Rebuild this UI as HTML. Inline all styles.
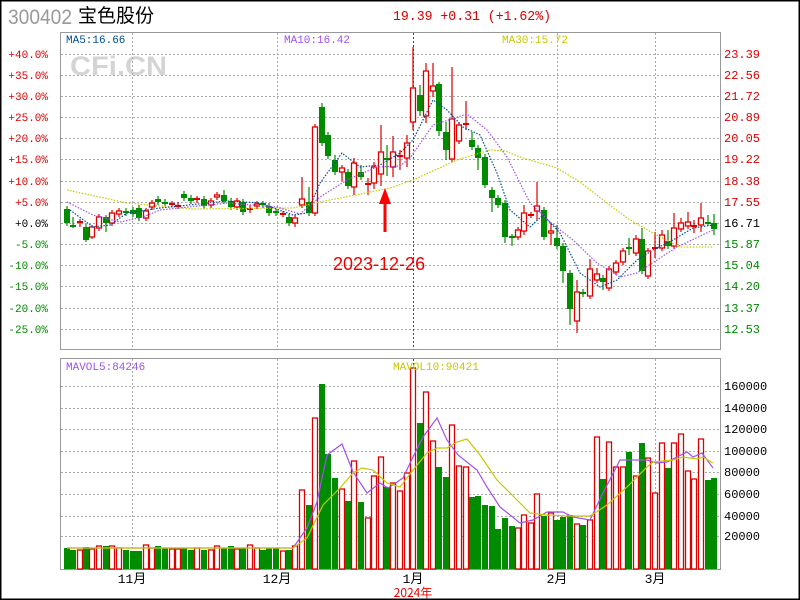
<!DOCTYPE html>
<html><head><meta charset="utf-8"><style>
html,body{margin:0;padding:0;background:#fff;}
#c{position:relative;width:800px;height:600px;overflow:hidden;font-family:"Liberation Sans","Noto Sans CJK SC",sans-serif;}
svg text{font-family:"Liberation Mono","Noto Sans CJK SC",monospace;}
</style></head><body><div id="c">
<svg id="s" width="800" height="600" viewBox="0 0 800 600" xmlns="http://www.w3.org/2000/svg">
<rect x="0.5" y="0.5" width="799" height="599" fill="#fff" stroke="#000" stroke-width="2"/>
<text x="8" y="24" font-size="21" fill="#999" textLength="64" lengthAdjust="spacingAndGlyphs" style="font-family:'Liberation Sans',sans-serif">300402</text>
<text x="78" y="22" font-size="19" fill="#000" style="font-family:'Noto Sans CJK SC',sans-serif">宝色股份</text>
<text x="393" y="20" font-size="14" fill="#d00" textLength="158" lengthAdjust="spacingAndGlyphs" style="font-family:'Liberation Mono',monospace">19.39 +0.31 (+1.62%)</text>
<text x="70" y="75" font-size="27" font-weight="bold" fill="#d4d4d4" textLength="97" lengthAdjust="spacingAndGlyphs" style="font-family:'Liberation Sans',sans-serif">CFi.CN</text>
<g id="grid"></g>
<rect x="60.5" y="32.5" width="660" height="317" fill="none" stroke="#999"/>
<rect x="60.5" y="358.5" width="660" height="211" fill="none" stroke="#999"/>
<g id="lab" font-size="11"></g>
<g id="vol"></g>
<g id="cnd"></g>
<g id="ma" fill="none"></g>
<text x="66" y="43" font-size="11" fill="#004c99">MA5:16.66</text>
<text x="284" y="43" font-size="11" fill="#a050f0">MA10:16.42</text>
<text x="502" y="43" font-size="11" fill="#c8c800">MA30:15.72</text>
<text x="66" y="370" font-size="11" fill="#a050f0">MAVOL5:84246</text>
<text x="393" y="370" font-size="11" fill="#c8c800">MAVOL10:90421</text>
<text x="333" y="270" font-size="18" fill="#e00" style="font-family:'Liberation Sans',sans-serif">2023-12-26</text>
<line x1="385" y1="200" x2="385" y2="232" stroke="#f00" stroke-width="3"/>
<polygon points="385,188 379,204 391,204" fill="#f00"/>
<g font-size="13" fill="#000" text-anchor="middle" style="font-family:'Noto Sans CJK SC',sans-serif">
<text x="132" y="583">11月</text><text x="277" y="583">12月</text><text x="413" y="583">1月</text><text x="557" y="583">2月</text><text x="655" y="583">3月</text>
</g>
<text x="413" y="597" font-size="12" fill="#e00" text-anchor="middle" style="font-family:'Noto Sans CJK SC',sans-serif">2024年</text>
</svg></div>
<script>
var NS="http://www.w3.org/2000/svg";
function el(p,t,a,txt){var e=document.createElementNS(NS,t);for(var k in a)e.setAttribute(k,a[k]);if(txt!=null)e.textContent=txt;document.getElementById(p).appendChild(e);return e;}
var py=[54,75,96,117,138,159,181,202,223,244,265,286,308,329];
var rl=["23.39","22.56","21.72","20.89","20.05","19.22","18.38","17.55","16.71","15.87","15.04","14.20","13.37","12.53"];
var ll=["+40.0%","+35.0%","+30.0%","+25.0%","+20.0%","+15.0%","+10.0%","+5.0%","+0.0%","-5.0%","-10.0%","-15.0%","-20.0%","-25.0%"];
py.forEach(function(y,i){
 el("grid","line",{x1:61,y1:y+.5,x2:720,y2:y+.5,stroke:"#aaa","stroke-dasharray":"2,2"});
 var col=i<8?"#d00":(i==8?"#000":"#080");
 el("lab","text",{x:48,y:y+4,"text-anchor":"end",fill:col},ll[i]);
 el("lab","text",{x:724,y:y+4,fill:col,"font-size":"12"},rl[i]);
});
var vy=[386,408,429,451,472,494,516,536];
var vl=["160000","140000","120000","100000","80000","60000","40000","20000"];
vy.forEach(function(y,i){
 el("grid","line",{x1:61,y1:y+.5,x2:720,y2:y+.5,stroke:"#aaa","stroke-dasharray":"2,2"});
 el("lab","text",{x:724,y:y+4,fill:"#000","font-size":"12"},vl[i]);
});
[132,277,557,655].forEach(function(x){
 el("grid","line",{x1:x+.5,y1:33,x2:x+.5,y2:349,stroke:"#aaa","stroke-dasharray":"2,2"});
 el("grid","line",{x1:x+.5,y1:359,x2:x+.5,y2:569,stroke:"#aaa","stroke-dasharray":"2,2"});
});
el("grid","line",{x1:413.5,y1:33,x2:413.5,y2:349,stroke:"#e00","stroke-dasharray":"2,2"});
el("grid","line",{x1:413.5,y1:359,x2:413.5,y2:569,stroke:"#e00","stroke-dasharray":"2,2"});
var C=`67,209,223,g
73,225,227,g,217,228
80,222,222,r,219,227
86,227,240,g,,242
92,227,237,r,225,239
99,217,228,r
106,217,223,g,215,232
112,213,223,r
119,211,214,r,208,217
126,211,213,g
133,210,214,g,207
139,208,218,g
146,211,218,r
152,203,207,r
158,199,202,g
165,203,203,g,199,206
172,204,204,r
178,206,206,r,202,209
184,194,198,g
191,198,201,g
197,199,199,r,196,203
204,199,206,g
211,201,205,r
217,195,197,r
224,195,201,g,190
231,201,207,g
237,201,207,r
243,202,212,g
250,209,209,r,205,213
257,204,206,r
263,204,204,g,201,208
269,206,213,g
276,212,213,g
283,214,214,r,211,217
289,217,223,g
295,218,223,r,215,227
302,199,205,r,177,208
309,202,213,g,187
315,127,213,r
322,107,143,g,103
328,135,156,g
335,160,172,g,155,175
342,168,172,r,165,181
348,172,186,g
354,163,187,r,158,195
361,172,177,g,165
368,184,184,r,178,195
374,167,183,r,162,189
381,152,174,r,125,186
387,159,159,g,145,176
393,152,167,r,136,177
400,156,156,r,150,170
407,143,158,r,135,167
413,88,122,r,47,130
420,95,111,g,85,116
426,71,116,r,63,123
433,86,91,r,63,97
439,84,131,g,82,136
446,132,150,g,122,160
452,119,159,r,67,162
459,125,141,r
466,124,124,r,101,130
472,140,147,g,132
478,148,158,g,145,170
485,157,185,g
492,190,198,g,,212
498,198,205,g
505,203,237,g,,243
512,237,237,g,,246
518,230,237,r
524,213,231,r,205,235
531,215,215,r
537,206,211,r,182,220
544,210,237,g
551,231,233,r,223,245
557,238,246,g,225
563,246,271,g,,283
570,273,309,g,,325
577,292,321,r,280,333
583,292,294,g
590,269,296,r,259
597,274,280,r,268
603,278,282,g,,290
609,269,288,r
616,263,272,r
623,251,262,r
629,248,248,g,238,255
636,239,253,r,235
642,239,271,g,228
648,251,276,r
655,248,248,r,232,258
662,235,248,r,230
668,241,246,g,230
674,228,246,r,213
681,223,229,r,218
688,222,226,r,212
694,226,227,r,220,233
701,218,225,r,203,232
708,223,223,g,215
714,223,229,g,214,235`.split("\n");
var V=[548,550,550,547,549,546,546,546,548,550,551,551,545,548,546,548,549,549,548,550,548,550,550,546,548,546,549,548,545,548,550,548,548,551,550,546,490,505,418,384,454,478,489,501,461,502,518,476,457,487,483,491,473,
368,423,392,441,467,477,425,466,467,497,496,505,506,529,518,526,528,515,523,494,516,513,520,517,515,524,525,520,437,479,442,467,467,452,476,443,458,493,443,468,443,434,471,479,439,480,478];
var R="#dd0000",G="#008c00";
C.forEach(function(l,i){
 var a=l.split(","),x=+a[0],t=+a[1],b=+a[2],up=a[3]=="r";
 var hi=a[4]?+a[4]:t-3,lo=a[5]?+a[5]:b+3,col=up?R:G;
 el("cnd","line",{x1:x,y1:hi,x2:x,y2:lo,stroke:col,"stroke-width":1.2});
 if(b-t<1.5){el("cnd","line",{x1:x-3,y1:t,x2:x+3,y2:t,stroke:col,"stroke-width":2});}
 else if(up){el("cnd","rect",{x:x-2.5,y:t,width:5,height:b-t,fill:"#fff",stroke:col,"stroke-width":1.3});}
 else{el("cnd","rect",{x:x-3,y:t,width:6,height:b-t,fill:col});}
 var vt=V[i];
 if(up) el("vol","rect",{x:x-2.5,y:vt,width:5,height:569-vt,fill:"#fff",stroke:R,"stroke-width":1.3});
 else el("vol","rect",{x:x-3,y:vt,width:6,height:569-vt,fill:G});
});
function pl(pts,col,dash){el("ma","polyline",{points:pts,stroke:col,"stroke-width":1.2,"stroke-dasharray":dash||"none",fill:"none"});}
pl("67,190 127,203 193,209 293,208 320,202 360,194 390,188 413,180 457,160 490,150 505,151 523,158 557,168 580,182 607,203 630,220 653,233 680,247 713,247","#c8c800","1.5,1.5");
pl("67,202 93,215 120,222 143,217 160,210 227,203 277,207 300,214 320,197 347,180 377,167 400,166 410,158 433,125 467,114 487,130 507,157 530,203 550,222 573,240 597,263 620,277 637,273 657,260 677,247 713,230","#a050f0","1.5,1.5");
pl("70,210 93,227 110,225 127,213 160,208 227,201 260,203 293,215 307,213 320,183 342,153 360,167 380,165 400,153 413,140 433,100 447,110 463,127 480,135 497,173 510,210 530,227 543,215 560,233 580,273 600,287 617,280 637,260 653,250 673,240 693,228 713,225","#004c99","1.5,1.5");
pl("67,548 293,548 307,528 317,502 327,455 342,444 353,472 367,493 380,483 388,488 403,478 413,457 423,437 437,418 447,440 458,455 477,470 487,487 500,507 520,523 533,520 547,512 563,512 573,517 590,520 603,493 620,460 633,460 647,460 657,463 667,462 687,452 693,457 702,453 713,468","#a050f0");
pl("67,548 293,548 307,538 323,505 340,488 353,473 362,468 373,470 387,483 400,487 413,470 427,453 437,448 447,448 457,442 467,439 480,455 497,480 510,493 530,513 547,515 567,516 590,516 607,505 627,487 647,467 653,462 673,460 683,457 697,459 703,457 713,463","#c8c800");
</script>
</body></html>
